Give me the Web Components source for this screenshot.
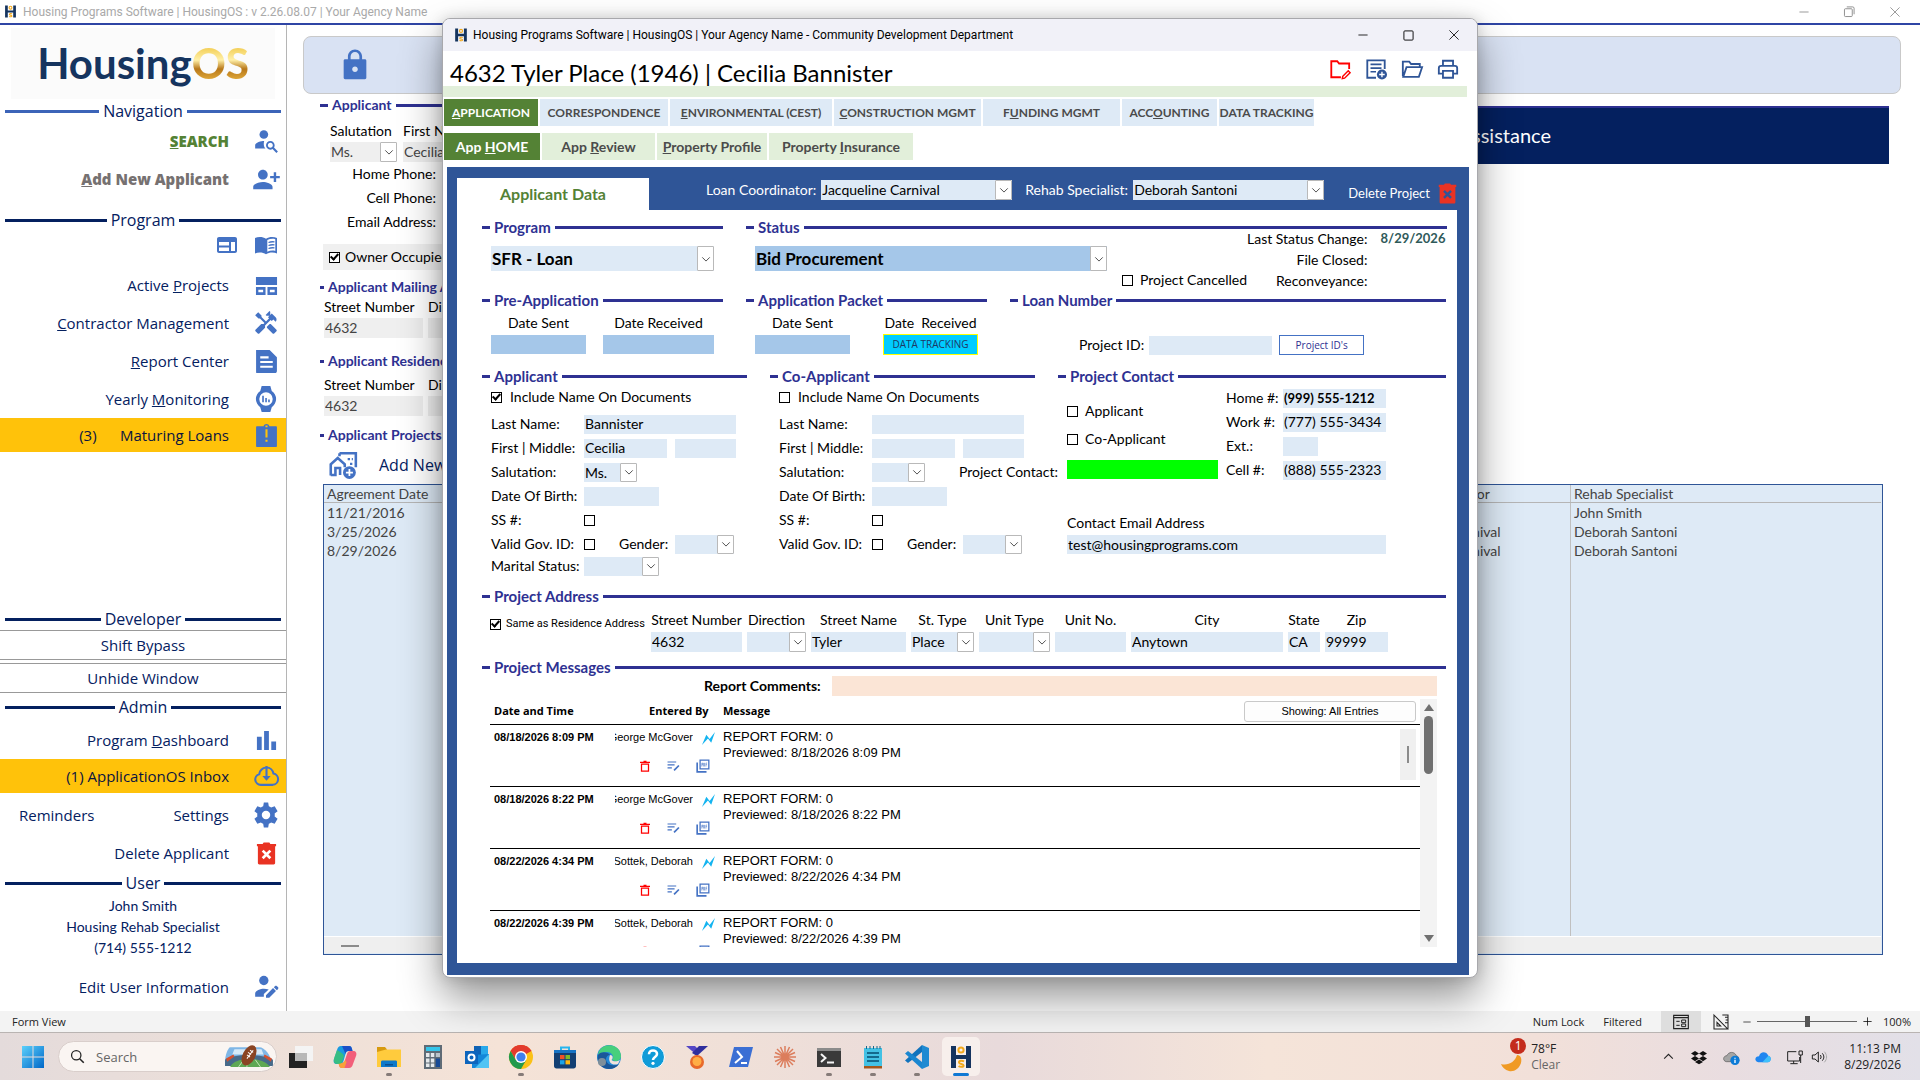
<!DOCTYPE html>
<html lang="en">
<head>
<meta charset="utf-8">
<title>HousingOS</title>
<style>
html, body { margin: 0; height: 100%; overflow: hidden; }
body { font-family: Lato, "Liberation Sans", sans-serif; font-size: 14px; line-height: 20px; color: #000; background: #fff; }
</style>
</head>
<body>
<housing-desktop></housing-desktop>
<script>
const UI = '"Open Sans", "Noto Sans", sans-serif';
const NARROW = 'Roboto, "Open Sans", sans-serif';

const ICONS = {
  hlogo: '<g><path fill="#15345f" d="M2 1h5v9h10V1h5v22h-5v-9H7v9H2z"/><circle cx="12" cy="5" r="2.6" fill="none" stroke="#f2a91d" stroke-width="2"/><path d="M15 16.500c-1.500-1-5-1-5 .9 0 2 4.600 1 4.600 3 0 1.700-3.600 1.800-5 .6" fill="none" stroke="#f2a91d" stroke-width="2"/></g>',
  lock: '<path d="M18 8h-1V6c0-2.760-2.240-5-5-5S7 3.240 7 6v2H5c-.6 0-1 .4-1 1v12c0 .6.4 1 1 1h14c.6 0 1-.4 1-1V9c0-.6-.4-1-1-1zm-6 9c-1.100 0-2-.9-2-2s.9-2 2-2 2 .9 2 2-.9 2-2 2zm3.100-9H8.900V6c0-1.710 1.390-3.100 3.100-3.100 1.710 0 3.100 1.390 3.100 3.100v2z"/>',
  personSearch: '<circle cx="10" cy="6" r="4"/><path d="M10.350 12C7.600 12 2 13.300 2 16v3h9.500C9 16.500 10.300 12.100 10.350 12z"/><path d="M19.430 18.020c.36-.59.57-1.280.57-2.020 0-2.210-1.790-4-4-4s-4 1.790-4 4 1.790 4 4 4c.74 0 1.430-.22 2.020-.57L21.600 23 23 21.600zM16 18.300c-1.300 0-2.300-1-2.300-2.300s1-2.300 2.300-2.300 2.300 1 2.300 2.300-1 2.300-2.300 2.300z"/>',
  personAdd: '<path d="M13 8c0-2.210-1.790-4-4-4S5 5.790 5 8s1.790 4 4 4 4-1.790 4-4zm2 1v2h3v3h2v-3h3V9h-3V6h-2v3h-3zM1 18v2h16v-2c0-2.660-5.330-4-8-4s-8 1.340-8 4z"/>',
  personEdit: '<circle cx="10" cy="6" r="4.300"/><path d="M2 21v-3c0-3 5-4.500 8-4.500 1.500 0 3 .3 4.500.8L10 18.500V21z"/><path d="M12 22v-2.500l6.500-6.500 2.700 2.700L15 22zM19.200 12.200l1-1c.6-.6 1.300-.6 1.900 0l.9.900c.6.6.6 1.300 0 1.900l-1 1z"/>',
  web: '<path d="M20 4H4c-1.100 0-2 .9-2 2v12c0 1.100.9 2 2 2h16c1.100 0 2-.9 2-2V6c0-1.100-.9-2-2-2zm-6 14H4v-3.500h10V18zm0-5.500H4V9h10v3.500zm6 5.500h-4V9h4v9z"/>',
  book: '<path d="M1 5c3-1.500 8-1.500 11 .8C15 3.500 20 3.500 23 5v15.500c-3-1.300-8-1.300-11 .8-3-2.100-8-2.100-11-.8zM13.300 7v11.700c2.500-1.200 5.500-1.400 8-.8V6.200c-2.500-.7-5.500-.4-8 .8z" fill-rule="evenodd"/><path d="M14.500 9.500c2-.8 4-.9 6-.6M14.500 12.500c2-.8 4-.9 6-.6M14.500 15.500c2-.8 4-.9 6-.6" fill="none" stroke="currentColor" stroke-width="1.300"/>',
  layout: '<path d="M1 3h22v8.500H1zM1 13.500h10V22H1zm2.500 3v2.500h5v-2.500zM13 13.500h10V22H13zm2.500 3v2.500h5v-2.500z" fill-rule="evenodd"/>',
  tools: '<path d="M21.670 18.170l-5.300-5.300h-.99l-2.540 2.540v.99l5.300 5.300c.39.39 1.020.39 1.410 0l2.120-2.120c.39-.38.39-1.020 0-1.410z"/><path d="M17.340 10.190l1.410-1.410 2.120 2.120c1.170-1.170 1.170-3.070 0-4.240l-3.540-3.540-1.410 1.410V1.710L15.220 1l-3.540 3.540.71.71h2.830l-1.410 1.410 1.060 1.060-2.890 2.890-4.130-4.130V5.060L4.830 2.040 2 4.870 5.030 7.900h1.410l4.130 4.130-.85.850H7.600l-5.300 5.300c-.39.39-.39 1.020 0 1.410l2.120 2.120c.39.39 1.020.39 1.410 0l5.300-5.300v-2.120l5.150-5.150z"/>',
  doc: '<path d="M2 1h13l7 7v13c0 1-.6 2-2 2H3c-1 0-1-.5-1-1zM6 7v2h8V7zm0 4.500v2h12v-2zM6 16v2h12v-2z" fill-rule="evenodd"/>',
  watch: '<path d="M8 0h8l1.300 4.500a9 9 0 0 1 0 15L16 24H8l-1.300-4.500a9 9 0 0 1 0-15zM12 5.800a6.200 6.200 0 1 0 0 12.400 6.200 6.200 0 0 0 0-12.400z" fill-rule="evenodd"/><path d="M8.500 9h1.500v6H8.500zM11.300 11h1.500v4h-1.500zM14 12.500h1.500V15H14z"/>',
  alert: '<path d="M21 3h-6.200C14.400 1.800 13.300 1 12 1s-2.400.8-2.800 2H3c-.6 0-1 .4-1 1v18c0 .6.4 1 1 1h18c.6 0 1-.4 1-1V4c0-.6-.4-1-1-1z"/><path fill="#ffc20a" d="M11 6h2v8h-2zM11 16h2v2h-2zM11 2.500h2V4h-2z"/>',
  bars: '<path d="M2 8h5v14H2zM9.500 2h5v20h-5zM17 13h5v9h-5z"/>',
  cloud: '<path d="M7 5.500A6.500 6.500 0 0 1 12 3.300a6.700 6.700 0 0 1 6.600 5.800A5.500 5.500 0 0 1 18 20H6.500A5.200 5.200 0 0 1 5 9.800 7 7 0 0 1 7 5.500z" fill="none" stroke="currentColor" stroke-width="2"/><path d="M11 2h2v9.500h3L12 16l-4-4.500h3z"/>',
  gear: '<path d="M20 13.300a8 8 0 0 0 0-2.600l2.700-2.100-2.700-4.700-3.300 1.200a8 8 0 0 0-2.100-1.200L14 .5h-4l-.6 3.400a8 8 0 0 0-2.100 1.200L4 3.900 1.300 8.600 4 10.700a8 8 0 0 0 0 2.600l-2.700 2.100L4 20.100l3.300-1.200a8 8 0 0 0 2.100 1.200l.6 3.400h4l.6-3.400a8 8 0 0 0 2.100-1.200l3.300 1.200 2.700-4.700zM12 15.900a3.900 3.900 0 1 1 0-7.800 3.900 3.900 0 0 1 0 7.800z"/>',
  trash: '<path fill="#e93323" d="M2 2h6l1-1.500h6L16 2h6v2.500h-1V22c0 .8-.6 1.500-1.500 1.500h-15C3.600 23.500 3 22.800 3 22V4.500H2z"/><path d="M8 9l8 8M16 9l-8 8" stroke="var(--x, currentColor)" stroke-width="2.800"/>',
  homeAdd: '<path d="M1.500 21V11.500L7.500 6l6 5.500V14M1.500 20.500h4v-6h4v6" fill="none" stroke="currentColor" stroke-width="2.200"/><path d="M9 2h14v12M9 2v2.500" fill="none" stroke="currentColor" stroke-width="2.200"/><path d="M16 6h2v2h-2zM19.500 6h1v2h-1zM18 10h2v2h-2z"/><circle cx="17.500" cy="18.500" r="5.500"/><path d="M17.500 15.500v6M14.500 18.500h6" stroke="#fff" stroke-width="1.500"/>',
  folderEdit: '<path d="M13 21H2.500V3.500H9l2 2.500h11v6" fill="none" stroke="currentColor" stroke-width="2"/><path d="M14.500 22.500l.5-2.500 6-6 2 2-6 6z" fill="none" stroke="currentColor" stroke-width="1.600"/>',
  noteAdd: '<path d="M12 21.500H2.500v-19h19V12" fill="none" stroke="currentColor" stroke-width="2"/><path d="M6 7h12M6 11h12M6 15h6" stroke="currentColor" stroke-width="1.800"/><circle cx="18.500" cy="18" r="5.500"/><path d="M18.500 15v6M15.500 18h6" stroke="#fff" stroke-width="1.500"/>',
  folderOpen: '<path d="M2 20V4h7l2 2.500h9.500V9M2.500 20.500L6 10h17l-3.500 10.500z" fill="none" stroke="currentColor" stroke-width="2"/>',
  printer: '<path d="M6.500 8V3h11v5M6.500 17H2V11c0-1.500 1-2.500 2.500-2.500h15c1.500 0 2.500 1 2.500 2.500v6h-4.500" fill="none" stroke="currentColor" stroke-width="2"/><path d="M6.500 14h11v7.500h-11z" fill="none" stroke="currentColor" stroke-width="2"/>',
  bin: '<path d="M5 8h14v14H5z" fill="none" stroke="#f00" stroke-width="2.500"/><path d="M2 4.500h20M9 2.500h6" stroke="#f00" stroke-width="2.500"/>',
  editNote: '<path d="M1 5.500h16M1 11h13M1 16.500h8" stroke="currentColor" stroke-width="2.200"/><path d="M13 21l9-9" stroke="currentColor" stroke-width="3.200"/>',
  pdf: '<path d="M7 2h15v15H7z" fill="none" stroke="currentColor" stroke-width="2.200"/><path d="M2 6v16h16" fill="none" stroke="currentColor" stroke-width="2.800"/><path d="M10 13V7h1.500v3H10M13.300 7v5.500h1V7zM17 13V7h2M17 9.700h2" fill="none" stroke="currentColor"/>',
  bolt: '<path fill="#14b4f0" d="M0 24L8 5l6 8L24 0l-7 20-6-8z"/>',
  win: '<defs><linearGradient id="w" x1="0" y1="0" x2="1" y2="1"><stop offset="0" stop-color="#5bd0fb"/><stop offset="1" stop-color="#0067c8"/></linearGradient></defs><path fill="url(#w)" d="M1 1h10.500v10.500H1zM12.500 1H23v10.500H12.500zM1 12.500h10.500V23H1zM12.500 12.500H23V23H12.500z"/>',
  search: '<circle cx="10" cy="10" r="7.500" fill="none" stroke="#222" stroke-width="2"/><path d="M15.500 15.500L22 22" stroke="#222" stroke-width="2.500"/>',
  taskview: '<path fill="#222" d="M0 8h18v15H0z"/><path fill="#f4f4f4" d="M6 1h18v15H6z"/><path fill="#b8b8b8" d="M6 8h12v8H6z"/>',
  copilot: '<path fill="#1a9be0" d="M8 1h8c2 0 2.500 1 3 3l.5 2h-4c-2 0-2.500 1-3 3l-2 7c-.5 2-1.500 3-3.500 3H4c-3 0-4-2-3-5l3-9c.7-2.500 2-4 4-4z"/><path fill="#1b50c8" d="M9 1h7c2 0 2.500 1 3 3l.5 2h-4c-2 0-2.500 1-3 3z"/><path fill="#f25f7a" d="M16 23H9c-2 0-2.500-1-3-3l-.5-2h3c2 0 3-1 3.500-3l2-6c.6-2 1.500-3 3.500-3H20c3 0 4 2 3 5l-3 8c-.7 2.500-2 4-4 4z"/><path fill="#f9a13a" d="M9 23c-2 0-2.500-1-3-3l-.5-2h3c2 0 3-1 3.500-3l1.500 2-2 6z"/><path fill="#3fc56b" d="M1.500 12L4 5c3 2 6 3 7 6l-1.500 5c-.5 2-1.500 3-3.500 3H4c-3 0-4-3-2.500-7z" opacity=".8"/>',
  explorer: '<path fill="#d79a10" d="M0 2h8l2 2.500v4H0z"/><path fill="#ffcb3d" d="M0 7l9-2.500h15V22H0z"/><path fill="#0f79c9" d="M4 17c0-1 .6-1.500 1.500-1.500h13c1 0 1.500.5 1.500 1.500v5H4z"/><path fill="#0a4f91" d="M8 19h8v1.500H8z"/>',
  calc: '<path fill="#5f6b76" d="M3 0h18v24H3z"/><path fill="#35c5ea" d="M5 2h14v4H5z"/><path fill="#e5e9ec" d="M5 8h3.500v4H5zM9.800 8h3.500v4H9.800zM5 13.500h3.500v4H5zM9.800 13.500h3.500v4H9.800zM5 18.500h3.500v3.500H5zM9.800 18.500h3.500v3.500H9.800z"/><path fill="#b9c3ca" d="M14.800 8H19v4h-4.200z"/><path fill="#174a96" d="M14.800 13.500H19V22h-4.200z"/>',
  outlook: '<path fill="#28a8ea" d="M9 1h14v9H9z"/><path fill="#0f62b5" d="M9 1h7v9H9z"/><path fill="#1487d9" d="M7 10l17-1v14H7z"/><path fill="#50c4f4" d="M24 9v14H10z"/><path fill="#0d65bd" d="M0 6h13v13H0z"/><circle cx="6.500" cy="12.500" r="3" fill="none" stroke="#fff" stroke-width="2"/>',
  chrome: '<circle cx="12" cy="12" r="12" fill="#fbc116"/><path fill="#e33b2e" d="M12 12L1.600 6A12 12 0 0 1 22.400 6z"/><path fill="#e33b2e" d="M12 6h10.400A12 12 0 0 0 1.600 6l5.200 9z"/><path fill="#229a4c" d="M1.600 6A12 12 0 0 0 12 24l5.200-9H6.800z"/><circle cx="12" cy="12" r="6" fill="#fff"/><circle cx="12" cy="12" r="4.600" fill="#3f7fee"/>',
  store: '<path d="M8 6V2.500h8V6" fill="none" stroke="#28b6ef" stroke-width="2"/><path fill="#123f73" d="M1 5h22v16c0 1.500-1 2.500-2.500 2.500h-17C2 23.500 1 22.500 1 21z"/><path fill="#1673c4" d="M1 5h22v3H1z"/><path fill="#f05125" d="M7 10h4.500v4.200H7z"/><path fill="#7eba27" d="M12.500 10H17v4.200h-4.500z"/><path fill="#1ba4e8" d="M7 15.200h4.500v4.200H7z"/><path fill="#fcb813" d="M12.500 15.200H17v4.200h-4.500z"/>',
  edge: '<circle cx="12" cy="12" r="12" fill="#2389d6"/><path fill="#47cf7c" d="M5 2.500C13-3 24 2 24 11c0 5-5 6-9 4 3-3 0-8-5-8-4 0-7 1-9 3 .5-3 1.500-5.500 4-7.500z"/><path fill="#1b5799" d="M1 10c3-4 10-3 12 0-5 0-6 8 1 10 3 .8 6 0 8-1-4 6-14 7-19 1-2-3-3-6-2-10z"/><path fill="#f1e3dc" d="M13 10c3 0 3.500 3 1.500 5 2 2 6 1.500 8.500 0l-2 4c-5 2-11-1-8-9z"/><circle cx="5" cy="17" r="4" fill="#7e8f9b"/>',
  help: '<circle cx="12" cy="12" r="11.500" fill="#0f9bd8" stroke="#fff"/><path d="M8 9.200C8 6.800 9.800 5.500 12 5.500s4 1.400 4 3.500c0 3-4 3-4 6" fill="none" stroke="#fff" stroke-width="2.600"/><circle cx="12" cy="18.300" r="1.600" fill="#fff"/>',
  medal: '<path fill="#5547c5" d="M1 1h9l3 3v7z"/><path fill="#2f2f9d" d="M23 1h-9L7 8l5 3z"/><circle cx="12" cy="17" r="7" fill="#e8692a"/><circle cx="12" cy="16.500" r="4.500" fill="#ffae45"/>',
  pshell: '<path fill="#3b6fd4" d="M5 2h19l-5 20H0z"/><path d="M8 6l5 6-7 6M12 18h6" fill="none" stroke="#fff" stroke-width="2"/>',
  claude: '<path d="M12 1v22M1 12h22M4 4l16 16M20 4L4 20M7.500 2l9 20M16.500 2l-9 20M2 7.500l20 9M2 16.500l20-9" stroke="#dc7d5c" stroke-width="1.500"/>',
  terminal: '<path fill="#3a3a3a" d="M0 3h24v19H0z"/><path fill="#8b8b8b" d="M0 3h24v3H0z"/><path d="M4 9l4.500 4L4 17M10 17.500h7" fill="none" stroke="#f5f5f5" stroke-width="2"/>',
  notepad: '<path fill="#43c1e4" d="M3 3h18v19H3z"/><path fill="#a5571b" d="M3 21h18v2.500H3z"/><path d="M6 8h12M6 12h12M6 16h12" stroke="#14698c" stroke-width="1.800"/><path d="M5.500 1v3M9 1v3M12.500 1v3M16 1v3M19 1v3" stroke="#14698c"/>',
  vscode: '<path fill="#1f8ad2" d="M17 0l7 3v18l-7 3z"/><path fill="#1173bd" d="M17 0v7L3 18l-3-2.500L17 0z"/><path fill="#1a86d0" d="M17 24v-7L3 6 0 8.500z"/>',
  ball: '<path fill="#7fb6e6" d="M4 3h28c5 0 11 8 11 13v5H-1v-5C-1 11 2 3 4 3z"/><path fill="#d6e9f7" d="M8 5h26l2 5H6z"/><path fill="#476a8a" d="M-1 15c8-6 36-6 46 0v6H-1z"/><path fill="#5fa854" d="M4 22c4-10 32-10 38 0z"/><path fill="#d24f2f" d="M0 14l7-4 1 2-7 5zM44 14l-7-4-1 2 7 5z"/><path d="M12 22l5-7M20 22v-7M33 22l-5-7" stroke="#d9f2cd" stroke-width=".8"/><ellipse cx="22" cy="11" rx="6" ry="10.500" transform="rotate(28 22 11)" fill="#8a4423"/><path d="M20 14l6-8M21 8l3 2M20 10.500l3 2M23 6l3 2" stroke="#fff" stroke-width="1"/>',
  moon: '<path fill="#f09a24" d="M1 15c7 2 14-2 16-9 4 0 5 4 4 8-2 6-7 9-12 8-4-1-7-4-8-7z"/>',
  chevUp: '<path d="M4 16l8-8 8 8" fill="none" stroke="#222" stroke-width="2"/>',
  dropbox: '<path fill="#111" d="M6 3l6 3.800-6 3.800L0 6.800zM18 3l6 3.800-6 3.800-6-3.800zM0 14.400l6-3.800 6 3.800-6 3.800zM18 10.600l6 3.800-6 3.800-6-3.800zM6 19.500l6-3.800 6 3.800-6 3.500z"/>',
  cloudInfo: '<path fill="#a5a5a5" stroke="#555" d="M5 19c-6-1-5-9 1-9 2-6 11-7 14 0 3 1 4 3 3 5l-8 4z"/><circle cx="18" cy="17" r="7" fill="#0d7bd7"/><path d="M18 16v5M18 13v1.600" stroke="#fff" stroke-width="2"/>',
  cloudBlue: '<path fill="#1f86f0" d="M5 20c-6-1-6-9 1-9C8 3 17 3 20 10c5 1 5 9-1 10z"/><path fill="#3fc0fb" d="M11 20l9-10c5 1 5 9-1 10z"/>',
  monitor: '<path d="M14 4H1v14h18v-6M5 22h11M10 18v4" fill="none" stroke="#222" stroke-width="1.500"/><path d="M18 3h5v6h-5zM20.500 9v12" fill="none" stroke="#222" stroke-width="1.500"/>',
  speaker: '<path d="M2 9h4l5-4.500v15L6 15H2zM14 9c1.500 2 1.500 4 0 6M17 6.500c3 3.500 3 7.500 0 11" fill="none" stroke="#222" stroke-width="1.500"/><path d="M20 4c4.500 5 4.500 11 0 16" fill="none" stroke="#aaa" stroke-width="1.500"/>',
  formView: '<path d="M1 2h22v20H1zM1 5.500h22" fill="none" stroke="#222" stroke-width="1.700"/><path d="M5 11h5M5 17h5M13 9h6v4h-6zM13 15h6v4h-6z" fill="none" stroke="#222" stroke-width="1.500"/>',
  design: '<path d="M1.500 1.500L22 22.500H1.500zM6 12.500l5.500 5.500H6zM14 1.500h8.500V22M18 5h4M19 9h3M18 13h4" fill="none" stroke="#222" stroke-width="1.600"/>',
  min: '<path d="M1 12h22" stroke="currentColor" stroke-width="2"/>',
  max: '<rect x="2" y="2" width="20" height="20" rx="2" fill="none" stroke="currentColor" stroke-width="2"/>',
  restore: '<rect x="1" y="6" width="17" height="17" rx="2" fill="none" stroke="currentColor" stroke-width="2"/><path d="M6 2h13c2 0 3 1 3 3v13" fill="none" stroke="currentColor" stroke-width="2"/>',
  close: '<path d="M1 1l22 22M23 1L1 23" stroke="currentColor" stroke-width="2"/>',
  plus: '<path d="M1 12h22M12 1v22" stroke="currentColor" stroke-width="2"/>',
  chev: '<path d="M3 8l9 9 9-9" fill="none" stroke="#444" stroke-width="2.200"/>'
};

function define(name, css, html) {
  const fixed = typeof html === 'string' ? document.createElement('template') : null;
  if (fixed) fixed.innerHTML = '<style>' + css + '</style>' + html;
  customElements.define(name, class extends HTMLElement {
    constructor() { super(); this.attachShadow({ mode: 'open' }); }
    connectedCallback() {
      if (this.shadowRoot.childNodes.length) return;
      if (fixed) { this.shadowRoot.append(fixed.content.cloneNode(true)); return; }
      const t = document.createElement('template');
      t.innerHTML = '<style>' + css + '</style>' + html(this);
      this.shadowRoot.append(t.content.cloneNode(true));
    }
  });
}

const icon = (name, w = 22, h = w) => `<ui-icon name="${name}" w="${w}" h="${h}"></ui-icon>`;
const combo = (id, value, width, cls = '') =>
  `<span class="combo ${cls}" style="width:${width}px"><select id="${id}" aria-label="${id}"><option>${value}</option></select><span class="arrow">${icon('chev', 10)}</span></span>`;
const box = (id, value, width, cls = '') =>
  `<input class="${cls}" id="${id}" aria-label="${id}" value="${value}" style="width:${width}px">`;
const check = (id, on) => `<input type="checkbox" id="${id}" aria-label="${id}" ${on ? 'checked' : ''}>`;

const CONTROLS = `
* { box-sizing: border-box; }
button { font: inherit; color: inherit; background: none; border: 0; padding: 0; margin: 0; }
input:not([type=checkbox]), select { font: inherit; color: inherit; border: 0; border-radius: 0; margin: 0; padding: 0 1px; background: #deeaf6; height: 19px; min-width: 0; outline: 0; }
.combo { display: inline-flex; height: 19px; background: #deeaf6; flex: none; }
.combo select { appearance: none; flex: 1; height: 100%; background: none; }
.combo .arrow { width: 17px; background: #fff; border: 1px solid #b9b9b9; border-radius: 1px; display: flex; align-items: center; justify-content: center; flex: none; }
input[type=checkbox] { appearance: none; width: 11px; height: 11px; border: 1px solid #000; background: #fff; margin: 0; flex: none; display: inline-grid; place-content: center; }
input[type=checkbox]:checked::before { content: ""; width: 3px; height: 6px; border: solid #000; border-width: 0 2px 2px 0; transform: rotate(42deg); margin-top: -2px; }
label { white-space: nowrap; }
`;

define('ui-icon', `:host { display: inline-flex; flex: none; } svg { display: block; overflow: visible; }`,
  el => {
    const n = el.getAttribute('name');
    return `<svg width="${el.getAttribute('w')}" height="${el.getAttribute('h')}" viewBox="0 0 ${n === 'ball' ? 44 : 24} 24" fill="currentColor" aria-hidden="true">${ICONS[n]}</svg>`;
  });

define('section-title', `
:host { display: flex; align-items: center; gap: 4px; height: 20px; color: #2e3192; font-weight: 700; font-size: 15px; white-space: nowrap; }
:host([small]) { font-size: 14px; }
i { width: 8px; height: 3px; background: #2e3192; }
:host([tight]) i { width: 4px; }
b { flex: 1; height: 3px; background: #2e3192; }`, '<i></i><slot></slot><b></b>');

define('app-titlebar', `
:host { display: flex; align-items: center; height: 23px; padding: 0 20px 0 4px; gap: 6px; color: #a9a9a9; font: 12px/20px ${NARROW}; border-bottom: 2px solid #2f45a5; background: #fff; }
.ctl { margin-left: auto; display: flex; gap: 35px; align-items: center; color: #888; }
button { border: 0; background: none; padding: 0; color: inherit; display: flex; }`,
  `${icon('hlogo', 13)}<span>Housing Programs Software | HousingOS : v 2.26.08.07 | Your Agency Name</span>
<span class="ctl"><button aria-label="Minimize">${icon('min', 10)}</button><button aria-label="Restore">${icon('restore', 11)}</button><button aria-label="Close">${icon('close', 10)}</button></span>`);

define('side-heading', `
:host { display: flex; align-items: center; gap: 4px; height: 22px; margin: 0 5px; color: #04205f; font: 16px/22px ${UI}; --line: #04205f; }
i { flex: 1; height: 3px; background: var(--line); }`, '<i></i><slot></slot><i></i>');

define('nav-item', `
:host { display: flex; align-items: center; height: 38px; padding: 0 4px 0 19px; font: 15px/22px ${UI}; color: #04205f; }
:host([mark]) { background: #ffc20a; height: 34px; color: #0a1440; }
a { color: inherit; text-decoration: none; white-space: nowrap; }
.main { margin-left: auto; }
.ic { width: 32px; margin-left: 21px; display: flex; justify-content: center; color: #4472c4; }`,
  el => `<slot name="lead"></slot><a class="main" href="#"><slot></slot></a><span class="ic">${icon(el.getAttribute('icon'), +el.getAttribute('size') || 24)}</span>`);

define('app-sidebar', `
:host { display: flex; flex-direction: column; width: 286px; flex: none; border-right: 1px solid #b5b5b5; background: #fff; padding-bottom: 5px; --x: #fff; }
.logo { height: 71px; margin: 3px 11px 1px; background: #fbfbfb; display: flex; align-items: center; justify-content: center; font: 700 42px/60px Lato, sans-serif; color: #15345f; padding-bottom: 2px; box-sizing: border-box; }
.logo b { background: linear-gradient(#f3cf58 25%, #fff0a8 45%, #b8781a 60%, #e0a93a 78%); -webkit-background-clip: text; background-clip: text; color: transparent; }
.quick { display: flex; justify-content: flex-end; align-items: center; gap: 15px; height: 28px; padding-right: 8px; margin-bottom: 7px; }
.quick button { border: 0; background: none; padding: 0; color: #4472c4; display: flex; }
.wide { font: 15px/20px ${UI}; color: #04205f; background: #fff; border: solid #999; border-width: 1px 0; height: 30px; margin: 0 0 3px; padding: 0; }
a.rem { color: inherit; text-decoration: none; }
.user { text-align: center; font-size: 14px; line-height: 21px; color: #04205f; padding: 1px 0 10px; }
.sp { flex: 1; }
nav-item[green] { color: #548235; font-weight: 700; } nav-item[grey] { color: #767171; font-weight: 700; }
.program { margin-top: 11px; } .admin { margin-bottom: 3px; } .settings { margin-top: 3px; }
`, `
<div class="logo"><span>Housing</span><b>OS</b></div>
<side-heading style="--line:#3c64b8">Navigation</side-heading>
<nav-item green icon="personSearch" size="26"><b><u>S</u>EARCH</b></nav-item>
<nav-item grey icon="personAdd" size="29"><b><u>A</u>dd New Applicant</b></nav-item>
<side-heading class="program">Program</side-heading>
<div class="quick"><button aria-label="Web view">${icon('web', 24)}</button><button aria-label="Manual">${icon('book', 24)}</button></div>
<nav-item icon="layout" size="23">Active <u>P</u>rojects</nav-item>
<nav-item icon="tools" size="26"><u>C</u>ontractor Management</nav-item>
<nav-item icon="doc" size="25"><u>R</u>eport Center</nav-item>
<nav-item icon="watch" size="26">Yearly <u>M</u>onitoring</nav-item>
<nav-item mark icon="alert" size="25">(3) &nbsp; &nbsp; &nbsp;Maturing Loans</nav-item>
<div class="sp"></div>
<side-heading>Developer</side-heading>
<button class="wide">Shift Bypass</button>
<button class="wide">Unhide Window</button>
<side-heading class="admin">Admin</side-heading>
<nav-item icon="bars" size="23">Program <u>D</u>ashboard</nav-item>
<nav-item mark icon="cloud" size="25">(1) ApplicationOS Inbox</nav-item>
<nav-item class="settings" icon="gear" size="26"><a class="rem" href="#" slot="lead">Reminders</a>Settings</nav-item>
<nav-item icon="trash" size="23">Delete Applicant</nav-item>
<side-heading>User</side-heading>
<div class="user">John Smith<br>Housing Rehab Specialist<br>(714) 555-1212</div>
<nav-item icon="personEdit" size="26">Edit User Information</nav-item>`);

define('applicant-form', CONTROLS + `
:host { flex: 1; min-width: 0; display: flex; flex-direction: column; background: #fff; padding: 11px 19px 56px 16px; }
.bar { height: 58px; border: 1px solid #c9c9c9; border-radius: 8px; background: #d9e2f3; display: flex; align-items: center; padding-left: 34px; color: #4472c4; flex: none; }
.cols { display: flex; justify-content: space-between; }
.left { width: 240px; padding-left: 17px; flex: none; padding-top: 1px; }
.banner { background: #04205f; border-top: 2px solid #2e3192; color: #fff; height: 58px; flex: 1; margin: 12px 12px 0 0; display: flex; align-items: center; justify-content: flex-end; font-size: 20px; padding: 0 338px 2px 0; }
.g { display: grid; grid-template-columns: 67px 1fr; gap: 1px 6px; padding-left: 10px; margin-top: 6px; white-space: nowrap; align-items: center; }
.g.s { grid-template-columns: 99px 1fr; column-gap: 5px; padding-left: 4px; margin-top: 0; }
.g.t { margin-top: 4px; }
.left input:not([type=checkbox]), .left .combo { background: #efefef; color: #444; height: 20px; }
.ph { width: 116px; text-align: right; line-height: 24px; }
.own { background: #f0f0f0; height: 26px; display: flex; align-items: center; gap: 5px; padding-left: 6px; margin: 10px 0 7px 3px; white-space: nowrap; }
.res { margin-top: 13px; } .prj { margin-top: 9px; }
.add { display: flex; align-items: center; gap: 22px; padding-left: 9px; height: 39px; color: #04205f; font: 16px/20px ${UI}; }
.add ui-icon { color: #4472c4; }
.add a { color: inherit; text-decoration: none; white-space: nowrap; }
.grid { flex: 1; margin: 0 18px 0 20px; border: 1px solid #2f5597; background: #deeaf6; display: flex; flex-direction: column; color: #444; padding: 0 1px 1px 0; }
.body { flex: 1; display: flex; background: linear-gradient(#c0c0c0, #c0c0c0) calc(100% - 310px) 0 / 1px 100% no-repeat; }
table { width: 100%; border-collapse: collapse; table-layout: fixed; align-self: flex-start; }
th { font-weight: 400; text-align: left; height: 17px; line-height: 17px; border-bottom: 1px solid #b5b5b5; padding: 0 3px; }
td { height: 19px; line-height: 19px; padding: 0 3px; }
.hs { height: 17px; background: #efefef; border-top: 1px solid #fff; padding: 8px 0 0 17px; }
.hs i { display: block; width: 18px; height: 2px; background: #8b8b8b; }
`, `
<div class="bar">${icon('lock', 34)}</div>
<div class="cols">
<div class="left">
<section-title small>Applicant</section-title>
<div class="g"><label for="Salutation">Salutation</label><label for="First">First Name</label>${combo('Salutation', 'Ms.', 67)}${box('First', 'Cecilia', 100)}</div>
<div class="ph">Home Phone:</div><div class="ph">Cell Phone:</div><div class="ph">Email Address:</div>
<div class="own">${check('own', true)}<label for="own">Owner Occupied</label></div>
<section-title small tight>Applicant Mailing Address</section-title>
<div class="g s"><label for="Mail Street">Street Number</label><label for="Mail Direction">Direction</label>${box('Mail Street', '4632', 99)}${box('Mail Direction', '', 60)}</div>
<section-title small tight class="res">Applicant Residence Address</section-title>
<div class="g s t"><label for="Home Street">Street Number</label><label for="Home Direction">Direction</label>${box('Home Street', '4632', 99)}${box('Home Direction', '', 60)}</div>
<section-title small tight class="prj">Applicant Projects</section-title>
<div class="add">${icon('homeAdd', 28)}<a href="#">Add New Project</a></div>
</div>
<div class="banner"><span>Assistance</span></div>
</div>
<div class="grid"><div class="body"><table>
<colgroup><col><col style="width:191px"><col style="width:310px"></colgroup>
<tr><th>Agreement Date</th><th>Loan Coordinator</th><th>Rehab Specialist</th></tr>
<tr><td>11/21/2016</td><td></td><td>John Smith</td></tr>
<tr><td>3/25/2026</td><td>Jacqueline Carnival</td><td>Deborah Santoni</td></tr>
<tr><td>8/29/2026</td><td>Jacqueline Carnival</td><td>Deborah Santoni</td></tr>
</table></div><div class="hs"><i></i></div></div>`);

define('person-fields', CONTROLS + `
:host { display: block; }
section-title { margin-right: 23px; }
.top { display: flex; align-items: center; gap: 8px; height: 22px; margin: 0 0 4px 9px; }
.r { display: flex; align-items: center; height: 24px; padding-left: 9px; }
.r > label:first-child { width: 93px; }
.r.last { height: 20px; }
.gen { margin: 0 6px 0 24px; width: 50px; }
slot { display: block; margin-left: auto; }
`, el => {
    const v = k => el.getAttribute(k) || '';
    return `<section-title>${v('heading')}</section-title>
<div class="top">${check('inc', el.hasAttribute('included'))}<label for="inc">Include Name On Documents</label></div>
<div class="r"><label for="last">Last Name:</label>${box('last', v('last'), 152)}</div>
<div class="r"><label for="first">First | Middle:</label>${box('first', v('first'), 83)}<span style="width:8px"></span>${box('middle', '', 61)}</div>
<div class="r"><label for="sal">Salutation:</label>${combo('sal', v('sal'), 53)}<slot></slot></div>
<div class="r"><label for="dob">Date Of Birth:</label>${box('dob', '', 75)}</div>
<div class="r"><label for="ss">SS #:</label>${check('ss')}</div>
<div class="r"><label for="gov">Valid Gov. ID:</label>${check('gov')}<label class="gen" for="gender">Gender:</label>${combo('gender', '', 59)}</div>
${el.hasAttribute('marital') ? `<div class="r last"><label for="mar">Marital Status:</label>${combo('mar', '', 75)}</div>` : ''}`;
  });

const MESSAGES = [
  ['08/18/2026 8:09 PM', 'George McGover', '8/18/2026 8:09 PM'],
  ['08/18/2026 8:22 PM', 'George McGover', '8/18/2026 8:22 PM'],
  ['08/22/2026 4:34 PM', 'Sottek, Deborah', '8/22/2026 4:34 PM'],
  ['08/22/2026 4:39 PM', 'Sottek, Deborah', '8/22/2026 4:39 PM']
];

define('message-list', CONTROLS + `
:host { display: flex; height: 248px; overflow: hidden; font-family: "Liberation Sans", sans-serif; }
.view { flex: 1; }
table { width: 100%; border-collapse: collapse; table-layout: fixed; }
th { height: 25px; padding: 0; text-align: left; font: 700 11px/20px ${UI}; }
th.by { padding-left: 34px; }
th .h { display: flex; justify-content: space-between; align-items: center; padding-right: 4px; }
th button { width: 172px; height: 21px; border: 1px solid #c9c9c9; border-radius: 3px; background: #fdfdfd; font: 11px/19px "Liberation Sans", sans-serif; }
td { height: 62px; padding: 4px 0 0; vertical-align: top; border-top: 1px solid #000; }
td.d, th.d { padding-left: 4px; }
td.d { font-size: 11px; line-height: 16px; font-weight: 700; }
.who { display: flex; align-items: flex-start; gap: 9px; height: 30px; }
.name { width: 78px; font-size: 11px; line-height: 16px; display: flex; justify-content: flex-end; overflow: hidden; white-space: nowrap; }
.acts { display: flex; justify-content: flex-end; align-items: center; gap: 16px; width: 95px; color: #4472c4; }
.acts button { display: flex; }
.who ui-icon { margin-top: 3px; }
.m { display: flex; justify-content: space-between; font-size: 13px; line-height: 16px; padding-right: 4px; }
.m i { width: 16px; height: 51px; background: #f0f0f0; display: flex; align-items: center; justify-content: center; }
.m i::before { content: ""; width: 2px; height: 17px; background: #8b8b8b; }
.sb { width: 17px; background: #f3f3f3; display: flex; flex-direction: column; align-items: center; padding: 5px 0; }
.sb::before { content: ""; border: 5px solid transparent; border-top: 0; border-bottom: 7px solid #707070; }
.sb::after { content: ""; border: 5px solid transparent; border-bottom: 0; border-top: 7px solid #707070; margin-top: auto; }
.sb i { width: 9px; height: 58px; border-radius: 5px; background: #707070; margin-top: 5px; }
`, `<div class="view"><table><colgroup><col style="width:125px"><col style="width:108px"><col></colgroup>
<thead><tr><th class="d">Date and Time</th><th class="by">Entered By</th><th><div class="h">Message<button>Showing: All Entries</button></div></th></tr></thead>
<tbody>${MESSAGES.map((m, i) => `<tr><td class="d">${m[0]}</td><td><div class="who"><span class="name">${m[1]}</span>${icon('bolt', 13)}</div><div class="acts"><button aria-label="Delete">${icon('bin', 12)}</button><button aria-label="Edit">${icon('editNote', 13)}</button><button aria-label="PDF">${icon('pdf', 14)}</button></div></td><td><div class="m"><span>REPORT FORM: 0<br>Previewed: ${m[2]}</span>${i ? '' : '<i></i>'}</div></td></tr>`).join('')}</tbody>
</table></div><div class="sb"><i></i></div>`);

define('project-form', CONTROLS + `
:host { display: block; background: #fff; padding: 7px 11px 16px 25px; }
.a { display: grid; grid-template-columns: 241px 1fr; column-gap: 23px; }
.b { display: grid; grid-template-columns: 241px 241px 1fr; column-gap: 23px; }
.c { display: grid; grid-template-columns: 288px 288px 1fr; margin-top: 11px; }
.combo.big { height: 25px; font-size: 17px; font-weight: 700; margin: 9px 0 0 9px; }
.combo.mid, input.mid.mid { background: #a5c7e9; }
.st { display: flex; }
.cancel { display: flex; align-items: center; gap: 7px; align-self: flex-end; margin: 0 0 0 15px; height: 20px; }
.info { display: grid; grid-template-columns: auto auto; justify-content: end; column-gap: 12px; margin: -9px 2px -1px auto; line-height: 21px; text-align: right; white-space: nowrap; }
.info b { color: #2f5a5a; min-width: 66px; font-size: 13px; }
.dates { display: grid; justify-content: start; justify-items: center; margin: 3px 0 0 9px; row-gap: 2px; white-space: pre; }
button.dt { width: 95px; height: 21px; margin: -1px 0; background: #0cf; border: 1px solid #ff0; font: 10px/17px ${UI}; color: #1f3864; }
.pid { display: flex; align-items: center; margin: 25px 0 0 69px; gap: 5px; }
button.pb { width: 85px; height: 20px; border: 1px solid #4472c4; color: #2e3192; font: 10px/17px ${UI}; margin-left: 2px; }
.pc { display: flex; gap: 8px; padding-left: 9px; }
.who { width: 151px; padding-top: 11px; }
.who div { display: flex; align-items: center; gap: 7px; height: 28px; }
.who input:not([type=checkbox]) { display: block; background: #0f0; margin-top: 7px; }
.ph div { display: flex; align-items: center; height: 24px; }
.ph label { width: 57px; }
input.hb.hb { font-weight: 700; font-size: 13px; }
.em { padding: 31px 0 0 9px; display: grid; row-gap: 2px; }
.addr { margin-top: 10px; }
.ad { display: flex; gap: 5px; margin: 4px 0 5px 8px; }
.ad .same { display: flex; align-items: center; gap: 5px; width: 156px; font: 11px/20px ${NARROW}; height: 28px; }
.ad .f { display: grid; justify-items: center; row-gap: 2px; width: min-content; }
.ad input:not([type=checkbox]), .ad .combo { height: 20px; }
.rc { display: flex; align-items: center; gap: 11px; margin: -1px 9px 3px 0; padding-left: 222px; }
.rc input:not([type=checkbox]) { flex: 1; height: 20px; background: #fbe5d6; }
message-list { margin: 0 9px 0 8px; }
`, `
<div class="a">
<div><section-title>Program</section-title>${combo('program', 'SFR - Loan', 223, 'big')}</div>
<div><section-title>Status</section-title><div class="st">${combo('status', 'Bid Procurement', 352, 'big mid')}
<div class="cancel">${check('cancel')}<label for="cancel">Project Cancelled</label></div>
<div class="info"><span>Last Status Change:</span><b>8/29/2026</b><span>File Closed:</span><b></b><span>Reconveyance:</span><b></b></div></div></div>
</div>
<div class="b">
<div><section-title>Pre-Application</section-title><div class="dates" style="grid-template-columns:95px 111px;column-gap:17px"><label for="ps">Date Sent</label><label for="pr">Date Received</label>${box('ps', '', 95, 'mid')}${box('pr', '', 111, 'mid')}</div></div>
<div><section-title>Application Packet</section-title><div class="dates" style="grid-template-columns:95px 95px;column-gap:33px"><label for="as">Date Sent</label><span>Date  Received</span>${box('as', '', 95, 'mid')}<button class="dt">DATA TRACKING</button></div></div>
<div><section-title>Loan Number</section-title><div class="pid"><label for="pid">Project ID:</label>${box('pid', '', 123)}<button class="pb">Project ID's</button></div></div>
</div>
<div class="c">
<person-fields heading="Applicant" included marital last="Bannister" first="Cecilia" sal="Ms."></person-fields>
<person-fields heading="Co-Applicant"><label for="contact">Project Contact:</label></person-fields>
<div><section-title>Project Contact</section-title>
<div class="pc"><div class="who"><div>${check('isapp')}<label for="isapp">Applicant</label></div><div>${check('isco')}<label for="isco">Co-Applicant</label></div>${box('contact', '', 151)}</div>
<div class="ph"><div><label for="hp">Home #:</label>${box('hp', '(999) 555-1212', 103, 'hb')}</div><div><label for="wp">Work #:</label>${box('wp', '(777) 555-3434', 103)}</div><div><label for="ex">Ext.:</label>${box('ex', '', 35)}</div><div><label for="cp">Cell #:</label>${box('cp', '(888) 555-2323', 103)}</div></div></div>
<div class="em"><label for="em">Contact Email Address</label>${box('em', 'test@housingprograms.com', 319)}</div></div>
</div>
<section-title class="addr">Project Address</section-title>
<div class="ad"><div class="same">${check('same', true)}<label for="same">Same as Residence Address</label></div>
${[['Street Number', 91, '4632'], ['Direction', 59, '', 1], ['Street Name', 95, 'Tyler'], ['St. Type', 63, 'Place', 1], ['Unit Type', 71, '', 1], ['Unit No.', 71, ''], ['City', 152, 'Anytown'], ['State', 32, 'CA'], ['Zip', 63, '99999']]
    .map(f => `<div class="f"><label for="${f[0]}">${f[0]}</label>${f[3] ? combo(f[0], f[2], f[1]) : box(f[0], f[2], f[1])}</div>`).join('')}</div>
<section-title>Project Messages</section-title>
<div class="rc"><label for="rc"><b>Report Comments:</b></label><input id="rc"></div>
<message-list></message-list>`);

define('tab-strip', `:host { display: flex; gap: 2px; padding-left: 1px; }`, '<slot></slot>');

define('project-window', CONTROLS + `
:host { display: flex; flex-direction: column; background: #fff; border: 1px solid #a8a8ac; border-radius: 8px; overflow: hidden; box-shadow: 0 20px 42px rgba(0,0,0,.42), 0 0 14px rgba(0,0,0,.14); }
.tb { height: 32px; background: #f1f1f8; display: flex; align-items: center; padding: 0 18px 0 11px; gap: 5px; font: 12px/20px ${NARROW}; }
.ctl { margin-left: auto; display: flex; gap: 35px; align-items: center; }
.ctl button, .acts button { display: flex; }
.hd { height: 35px; display: flex; align-items: center; justify-content: space-between; padding: 0 18px 0 7px; }
h1 { margin: 8px 0 0; font-size: 24px; line-height: 28px; font-weight: 400; white-space: nowrap; }
.acts { display: flex; gap: 14px; color: #2f5597; }
.gr { height: 11px; margin-right: 10px; background: #e2efda; }
tab-strip { margin-top: 2px; } tab-strip[green] { margin: 7px 0; }
tab-strip button { height: 27px; font-weight: 700; font-size: 12px; color: #4b4b4b; background: #deeaf6; white-space: nowrap; }
tab-strip[green] button { background: #e2efda; font-size: 14px; }
tab-strip button[on] { background: #548235; color: #fff; }
.panel { background: #2f5597; margin: 0 8px 2px 4px; padding: 11px 12px 12px 10px; }
.bar { display: flex; height: 32px; color: #fff; align-items: center; }
.tab { align-self: stretch; width: 192px; background: #fff; color: #548235; font-size: 16px; font-weight: 700; display: flex; align-items: center; justify-content: center; margin-right: 57px; }
.bar .combo { color: #000; height: 20px; margin: 0 13px 8px 5px; }
.bar > label { margin-bottom: 8px; }
.del { margin-left: auto; display: flex; align-items: center; gap: 7px; margin: 0 -1px 2px auto; white-space: nowrap; font-size: 13px; --x: #2f5597; }
`, `
<div class="tb">${icon('hlogo', 14)}<span>Housing Programs Software | HousingOS | Your Agency Name - Community Development Department</span><span class="ctl"><button aria-label="Minimize">${icon('min', 10)}</button><button aria-label="Maximize">${icon('max', 11)}</button><button aria-label="Close">${icon('close', 10)}</button></span></div>
<div class="hd"><h1>4632 Tyler Place (1946) | Cecilia Bannister</h1><span class="acts"><button style="color:#f00" aria-label="Rename folder">${icon('folderEdit', 22)}</button><button aria-label="Add note">${icon('noteAdd', 22)}</button><button aria-label="Open folder">${icon('folderOpen', 22)}</button><button aria-label="Print">${icon('printer', 22)}</button></span></div>
<div class="gr"></div>
<tab-strip><button on style="width:94px"><u>A</u>PPLICATION</button><button style="width:128px">CORRESPONDENCE</button><button style="width:162px"><u>E</u>NVIRONMENTAL (CEST)</button><button style="width:147px"><u>C</u>ONSTRUCTION MGMT</button><button style="width:137px">F<u>U</u>NDING MGMT</button><button style="width:95px">ACC<u>O</u>UNTING</button><button style="width:95px">DATA TRACKING</button></tab-strip>
<tab-strip green><button on style="width:96px">App <u>H</u>OME</button><button style="width:113px">App <u>R</u>eview</button><button style="width:110px"><u>P</u>roperty Profile</button><button style="width:144px">Property <u>I</u>nsurance</button></tab-strip>
<div class="panel">
<div class="bar"><span class="tab">Applicant Data</span><label for="coord">Loan Coordinator:</label>${combo('coord', 'Jacqueline Carnival', 191)}<label for="rehab">Rehab Specialist:</label>${combo('rehab', 'Deborah Santoni', 191)}<button class="del">Delete Project${icon('trash', 21)}</button></div>
<project-form></project-form>
</div>`);

define('status-bar', `
:host { display: flex; align-items: center; height: 22px; box-sizing: border-box; background: #f3f3f3; border-bottom: 1px solid #b9b4b2; font: 11px/20px ${UI}; color: #222; padding: 0 9px 0 12px; }
.n { margin-left: auto; margin-right: 19px; } .f { margin-right: 19px; }
button { border: 0; padding: 0; background: none; width: 40px; height: 21px; display: flex; align-items: center; justify-content: center; }
.on { background: #dedede; }
.z { width: 12px; }
input { appearance: none; width: 100px; height: 12px; margin: 0 4px; background: linear-gradient(#666, #666) center / 100% 1px no-repeat; }
input::-webkit-slider-thumb { appearance: none; width: 5px; height: 11px; background: #555; }
output { margin-left: 10px; }
.z:first-of-type { margin-left: 2px; }`,
  `<span>Form View</span><span class="n">Num Lock</span><span class="f">Filtered</span><button class="on" aria-label="Form view">${icon('formView', 16)}</button><button aria-label="Design view">${icon('design', 16)}</button><button class="z" aria-label="Zoom out">${icon('min', 8)}</button><input type="range" aria-label="Zoom" value="50"><button class="z" aria-label="Zoom in">${icon('plus', 9)}</button><output>100%</output>`);

const APPS = [['taskview'], ['copilot'], ['explorer', 1], ['calc'], ['outlook'], ['chrome', 1], ['store'], ['edge'], ['help'], ['medal'], ['pshell'], ['claude'], ['terminal', 1], ['notepad', 1], ['vscode', 1], ['hlogo', 2]];

define('task-bar', `
:host { display: flex; align-items: center; height: 47px; padding: 0 19px 0 21px; box-sizing: border-box; font: 12px/16px ${UI}; color: #222; background: linear-gradient(90deg, #e4dbdb 0, #ecdfd9 12%, #f5e3d7 26%, #f0e0d8 38%, #e8dadb 52%, #f5e4d9 66%, #f2e0d9 80%, #e9dde0 90%, #e2e0e8 100%); position: relative; z-index: 5; }
button { border: 0; padding: 0; background: none; display: flex; align-items: center; justify-content: center; }
.s { display: flex; align-items: center; width: 219px; height: 31px; border-radius: 16px; background: #faf5f2; border: 1px solid #d9cecb; margin: 0 2px 0 13px; padding: 0 4px 0 11px; gap: 11px; box-sizing: border-box; overflow: hidden; }
.s input { border: 0; background: none; outline: 0; flex: 1; min-width: 0; font: 13px/20px ${UI}; color: #555; padding: 0; }
.s input::placeholder { color: #666; opacity: 1; }
.app { width: 44px; height: 39px; position: relative; }
.run::after { content: ""; position: absolute; bottom: 0; width: 6px; height: 3px; border-radius: 2px; background: #857b78; }
.cur { background: #f7efec; border-radius: 5px; width: 38px; margin-left: 3px; }
.cur::after { content: ""; position: absolute; bottom: 0; width: 16px; height: 3px; border-radius: 2px; background: #0f78d4; }
.w { margin-left: auto; display: flex; align-items: center; gap: 7px; }
.wi { position: relative; display: flex; padding-top: 8px; }
.wi b { position: absolute; left: 10px; top: -3px; width: 16px; height: 16px; border-radius: 8px; background: #c42b1c; color: #fff; font-weight: 400; text-align: center; }
.w small { font-size: 12px; color: #666; }
.t { display: flex; align-items: center; gap: 16px; margin: 0 17px 0 102px; }
.t span { display: flex; gap: 8px; }
.c { text-align: right; }`,
  `<button aria-label="Start">${icon('win', 24)}</button><div class="s">${icon('search', 15)}<input placeholder="Search" aria-label="Search">${icon('ball', 46, 25)}</div>
${APPS.map(a => `<button aria-label="${a[0]}" class="app ${a[1] === 1 ? 'run' : a[1] === 2 ? 'cur' : ''}">${icon(a[0], 24)}</button>`).join('')}
<div class="w"><span class="wi">${icon('moon', 24)}<b>1</b></span><span>78°F<br><small>Clear</small></span></div>
<div class="t">${icon('chevUp', 13)}${icon('dropbox', 16)}${icon('cloudInfo', 16)}${icon('cloudBlue', 16)}<span>${icon('monitor', 16)}${icon('speaker', 16)}</span></div>
<div class="c">11:13 PM<br>8/29/2026</div>`);

define('housing-desktop', `
:host { display: flex; flex-direction: column; height: 100vh; overflow: hidden; position: relative; }
.main { flex: 1; display: flex; min-height: 0; }
project-window { position: absolute; left: 442px; right: 442px; top: 18px; }`,
  `<app-titlebar></app-titlebar><div class="main"><app-sidebar></app-sidebar><applicant-form></applicant-form></div><status-bar></status-bar><task-bar></task-bar><project-window></project-window>`);
</script>
</body>
</html>
